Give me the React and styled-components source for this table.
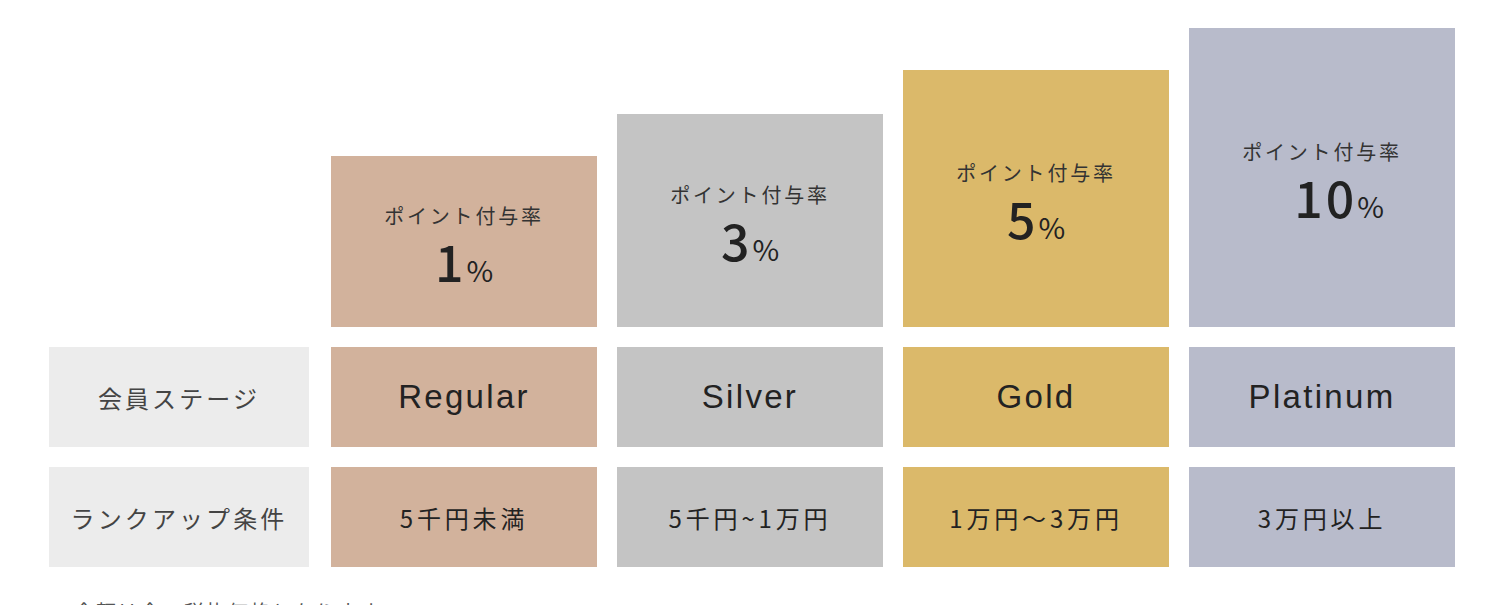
import styled, { createGlobalStyle } from "styled-components";

const GlobalStyle = createGlobalStyle`
  html, body {
    margin: 0;
    padding: 0;
    background: #fff;
  }
  body {
    font-family: "Noto Sans CJK JP", "Noto Sans", sans-serif;
    color: #222;
    overflow: hidden;
  }
`;

const tiers = [
  { name: "Regular", rate: "1", bar: 171, color: "#d2b29c", cond: "5千円未満" },
  { name: "Silver", rate: "3", bar: 213, color: "#c4c4c4", cond: "5千円~1万円" },
  { name: "Gold", rate: "5", bar: 257, color: "#dbb96a", cond: "1万円〜3万円" },
  { name: "Platinum", rate: "10", bar: 299, color: "#b8bbcb", cond: "3万円以上", shift: 34 },
];

const Page = styled.div`
  padding: 28px 0 0 49px;
  height: 605px;
  box-sizing: border-box;
`;

const Table = styled.div`
  display: grid;
  grid-template-columns: 262px repeat(4, 266px);
  grid-template-rows: 299px 100px 100px;
  column-gap: 20px;
  row-gap: 20px;
`;

const Blank = styled.div``;

const RateBar = styled.div`
  align-self: end;
  height: ${(p) => p.$h}px;
  background: ${(p) => p.$bg};
  display: flex;
  flex-direction: column;
  align-items: center;
  justify-content: center;
  padding-top: 18px;
  box-sizing: border-box;
`;

const RateLabel = styled.div`
  font-size: 20px;
  letter-spacing: 0.14em;
  line-height: 28px;
  color: #333;
`;

const RateValue = styled.div`
  font-size: 50px;
  font-weight: 500;
  line-height: 60px;
  letter-spacing: 0.06em;
  color: #222;
  padding-left: ${(p) => p.$shift || 0}px;

  span {
    font-size: 29px;
    font-weight: 400;
    letter-spacing: 0;
  }
`;

const HeadCell = styled.div`
  width: 260px;
  background: #ececec;
  display: flex;
  align-items: center;
  justify-content: center;
  font-size: 24px;
  letter-spacing: 0.13em;
  color: #444;
`;

const Cell = styled.div`
  background: ${(p) => p.$bg};
  display: flex;
  align-items: center;
  justify-content: center;
  color: #222;
`;

const StageName = styled.span`
  font-family: "Liberation Sans", Arial, sans-serif;
  font-size: 33px;
  letter-spacing: 0.07em;
`;

const Condition = styled.span`
  font-size: 24px;
  letter-spacing: 0.16em;
`;

const Note = styled.p`
  margin: 30px 0 0 3px;
  font-size: 20px;
  letter-spacing: 0.1em;
  color: #555;
`;

export default function App() {
  return (
    <>
      <GlobalStyle />
      <Page>
        <Table>
          <Blank />
          {tiers.map((t) => (
            <RateBar key={t.name} $h={t.bar} $bg={t.color}>
              <RateLabel>ポイント付与率</RateLabel>
              <RateValue $shift={t.shift}>
                {t.rate}
                <span>%</span>
              </RateValue>
            </RateBar>
          ))}

          <HeadCell>会員ステージ</HeadCell>
          {tiers.map((t) => (
            <Cell key={t.name} $bg={t.color}>
              <StageName>{t.name}</StageName>
            </Cell>
          ))}

          <HeadCell>ランクアップ条件</HeadCell>
          {tiers.map((t) => (
            <Cell key={t.name} $bg={t.color}>
              <Condition>{t.cond}</Condition>
            </Cell>
          ))}
        </Table>
        <Note>※金額は全て税抜価格となります。</Note>
      </Page>
    </>
  );
}
